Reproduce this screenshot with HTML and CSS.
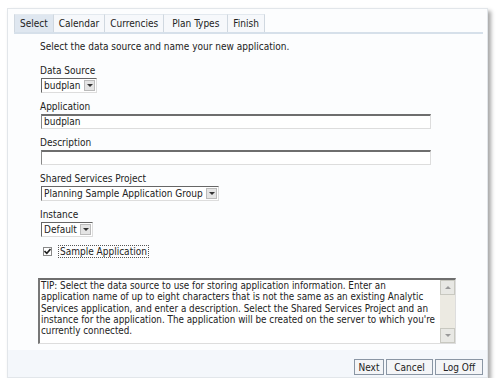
FILE: index.html
```html
<!DOCTYPE html>
<html lang="en">
<head>
    <meta charset="UTF-8">
    <title>Create Application</title>
    <link rel="stylesheet" href="styles.css">
</head>
<body>
    <div class="panel">
        <div class="tabs">
            <span class="tab active">Select</span>
            <span class="tab">Calendar</span>
            <span class="tab">Currencies</span>
            <span class="tab tab-wide">Plan Types</span>
            <span class="tab">Finish</span>
        </div>

        <div class="content">
            <p class="intro">Select the data source and name your new application.</p>

            <div class="field">
                <label>Data Source</label>
                <div class="select"><span class="value">budplan</span><span class="arrow"></span></div>
            </div>

            <div class="field">
                <label>Application</label>
                <div class="input">budplan</div>
            </div>

            <div class="field">
                <label>Description</label>
                <div class="input"></div>
            </div>

            <div class="field">
                <label>Shared Services Project</label>
                <div class="select"><span class="value">Planning Sample Application Group</span><span class="arrow"></span></div>
            </div>

            <div class="field">
                <label>Instance</label>
                <div class="select"><span class="value">Default</span><span class="arrow"></span></div>
            </div>

            <div class="check">
                <span class="box">
                    <svg width="7" height="7" viewBox="0 0 7 7"><path d="M0.5 3 L2.8 5.3 L6.5 1" fill="none" stroke="#222" stroke-width="1.6"/></svg>
                </span>
                <span class="check-label">Sample Application</span>
            </div>
        </div>

        <div class="tip">
            <div class="tip-text">TIP: Select the data source to use for storing application information. Enter an<br>application name of up to eight characters that is not the same as an existing Analytic<br>Services application, and enter a description. Select the Shared Services Project and an<br>instance for the application. The application will be created on the server to which you're<br>currently connected.</div>
            <div class="scrollbar">
                <span class="sb-btn up"></span>
                <span class="sb-track"></span>
                <span class="sb-btn down"></span>
            </div>
        </div>

        <div class="footer">
            <button class="btn btn-next">Next</button>
            <button class="btn btn-cancel">Cancel</button>
            <button class="btn btn-logoff">Log Off</button>
        </div>
    </div>
</body>
</html>
```

FILE: styles.css
```css
body {
    margin: 0;
    background: #ffffff;
    font-family: 'DejaVu Sans Condensed', 'DejaVu Sans', Verdana, sans-serif;
    font-size: 10px;
    color: #222;
}

.panel {
    margin: 8px 0 0 7px;
    width: 481px;
    height: 370px;
    background: #fcfdfe;
    border: 1px solid #e2e6ea;
    box-shadow: 3px 3px 4px rgba(0, 0, 0, 0.35);
    display: flex;
    flex-direction: column;
    box-sizing: border-box;
}

/* tabs */
.tabs {
    display: flex;
    margin: 5px 4px 0 6px;
    border-bottom: 2px solid #d6e0ea;
}

.tab {
    height: 17px;
    line-height: 17px;
    padding: 0 5px;
    border-right: 1px solid #d0d8e0;
    border-top: 1px solid #e3e9ef;
    background: #f6f8fb;
}

.tab:first-child {
    border-left: 1px solid #d0d8e0;
}

.tab.active {
    background: #dfe7f0;
}

.tab-wide {
    padding: 0 8px;
}

/* form */
.content {
    padding: 0 0 0 32px;
}

.intro {
    margin: 7px 0 12px 0;
    line-height: 12px;
}

.field {
    margin-bottom: 8px;
}

.field label {
    display: block;
    line-height: 12px;
    margin: 0 0 1px 0;
}

.select {
    display: inline-flex;
    align-items: center;
    height: 13px;
    margin-left: 1px;
    border-top: 1px solid #666;
    border-left: 1px solid #666;
    border-right: 1px solid #ddd;
    border-bottom: 1px solid #ddd;
    background: #fff;
}

.select .value {
    padding: 0 3px 0 2px;
    line-height: 13px;
}

.select .arrow {
    width: 11px;
    height: 11px;
    margin-right: 1px;
    background: #e4e4e4;
    border: 1px solid #bbb;
    box-sizing: border-box;
    position: relative;
}

.select .arrow::after {
    content: "";
    position: absolute;
    left: 2px;
    top: 3px;
    border-left: 3px solid transparent;
    border-right: 3px solid transparent;
    border-top: 3px solid #333;
}

.input {
    width: 386px;
    height: 12px;
    line-height: 12px;
    margin-left: 1px;
    padding-left: 2px;
    border-top: 2px solid #6e6e6e;
    border-left: 1px solid #888;
    border-right: 1px solid #ddd;
    border-bottom: 1px solid #ddd;
    background: #fff;
}

.check {
    display: flex;
    align-items: center;
    margin: 8px 0 0 3px;
}

.box {
    width: 7px;
    height: 7px;
    border: 1px solid #888;
    background: #fff;
    display: flex;
}

.check-label {
    margin-left: 6px;
    padding: 0 1px;
    border: 1px dotted #555;
    line-height: 11px;
}

/* tip box */
.tip {
    display: flex;
    margin: 20px 0 0 30px;
    width: 418px;
    height: 66px;
    border-top: 2px solid #6e6e6e;
    border-left: 2px solid #777;
    border-right: 1px solid #ddd;
    border-bottom: 1px solid #ddd;
    background: #fff;
    box-sizing: border-box;
}

.tip-text {
    flex: 1;
    padding: 0 1px;
    font-size: 9.8px;
    line-height: 11.3px;
    white-space: nowrap;
    overflow: hidden;
}

.scrollbar {
    width: 15px;
    display: flex;
    flex-direction: column;
    background: #eceae2;
}

.sb-btn {
    height: 15px;
    background: #e8e8e4;
    border: 1px solid #c8c8c0;
    box-sizing: border-box;
    position: relative;
}

.sb-btn::after {
    content: "";
    position: absolute;
    left: 4px;
    top: 5px;
    border-left: 3px solid transparent;
    border-right: 3px solid transparent;
}

.sb-btn.up::after {
    border-bottom: 3px solid #999;
}

.sb-btn.down::after {
    border-top: 3px solid #999;
}

.sb-track {
    flex: 1;
}

/* footer */
.footer {
    margin-top: auto;
    height: 27px;
    display: flex;
    justify-content: flex-end;
    align-items: flex-start;
    gap: 2px;
    padding: 9px 4px 0 0;
    box-sizing: border-box;
    background: #f4f7fb;
}

.btn {
    font-family: 'DejaVu Sans Condensed', 'DejaVu Sans', Verdana, sans-serif;
    font-size: 10px;
    color: #222;
    height: 16px;
    padding: 0;
    background: #f4f5f7;
    border: 1px solid #8a96a4;
    margin: 0;
}

.btn-next {
    width: 30px;
}

.btn-cancel {
    width: 47px;
}

.btn-logoff {
    width: 48px;
}
```
